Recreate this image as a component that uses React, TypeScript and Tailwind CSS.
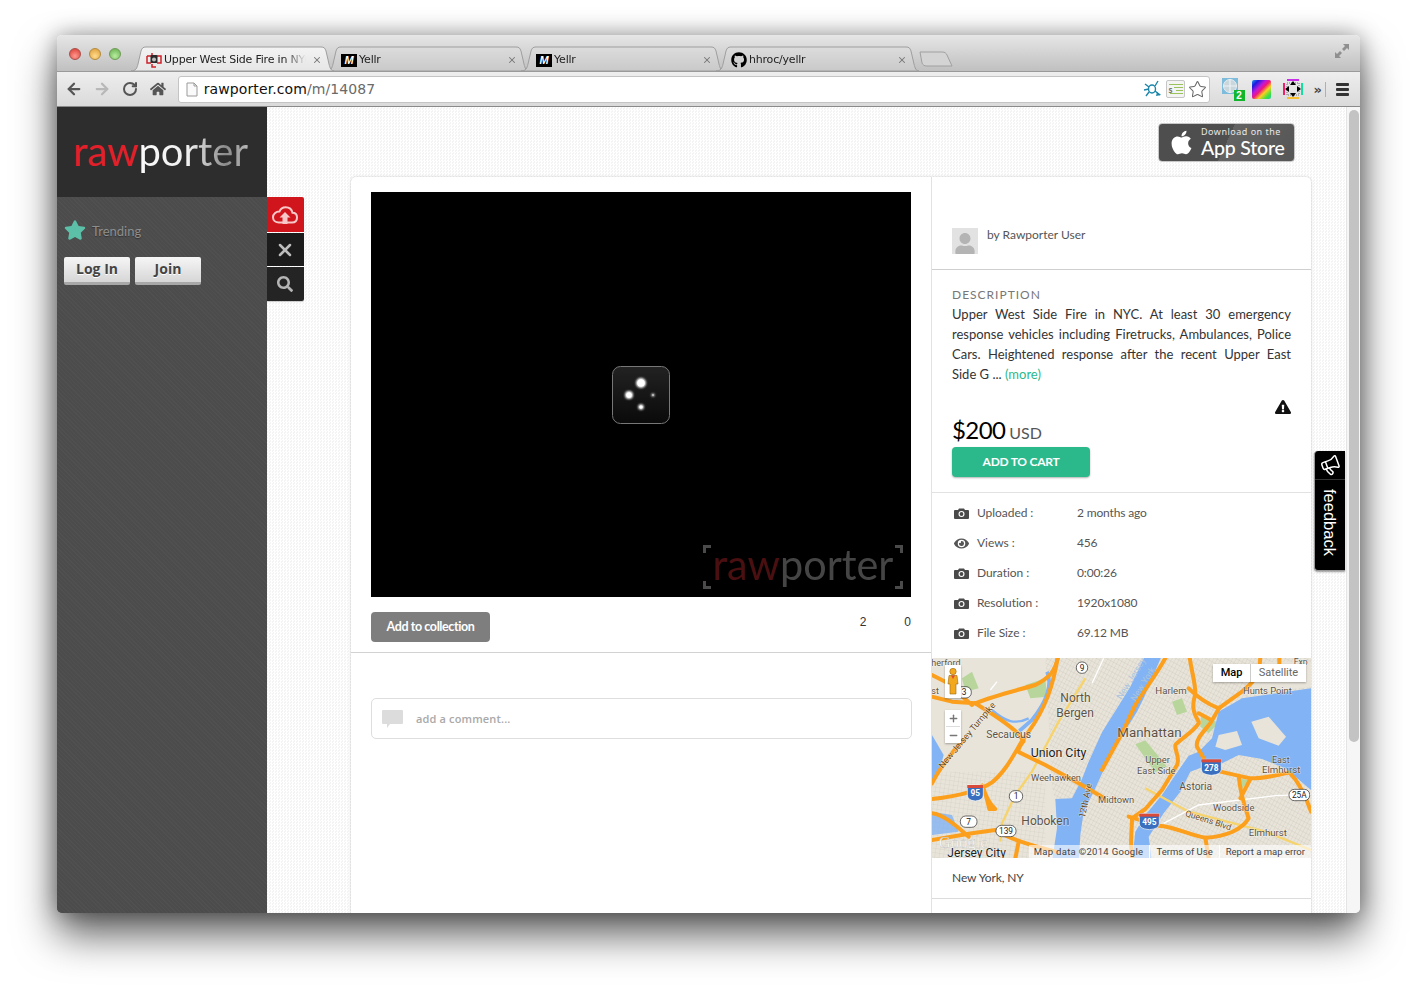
import React from "react";
import { ArrowLeft, ArrowRight, RotateCw, X, Star, Plus, Minus, Megaphone } from "lucide-react";
import { FaApple, FaEye, FaExclamationTriangle, FaGithub, FaStar, FaSearch, FaUser, FaHome } from "react-icons/fa";

const lato = "font-['Lato','Liberation_Sans',sans-serif]";
const lucida = "font-['DejaVu_Sans','Liberation_Sans',sans-serif]";

function Lights() {
  return (
    <div className="flex gap-[8px] pl-[12px] w-[74px] shrink-0 self-start pt-[13px]">
      <span className="w-[12px] h-[12px] rounded-full border border-[#a8504a] bg-[radial-gradient(circle_at_50%_70%,#ff9a90,#d8372f)]" />
      <span className="w-[12px] h-[12px] rounded-full border border-[#b58a3c] bg-[radial-gradient(circle_at_50%_70%,#ffdc8c,#dc9a34)]" />
      <span className="w-[12px] h-[12px] rounded-full border border-[#6f9b55] bg-[radial-gradient(circle_at_50%_70%,#b8eda0,#62ae4b)]" />
    </div>
  );
}

function Mark() {
  return (
    <span className="w-[16px] h-[13px] bg-black text-white text-[11px] leading-[13px] font-bold italic text-center font-['Liberation_Sans',sans-serif] shrink-0">
      M
    </span>
  );
}

function RawIcon() {
  return (
    <svg width="16" height="16" viewBox="0 0 16 16" className="shrink-0">
      <path d="M1 4 H5 M1 4 V11 H5 M11 4 H15 V11 H11" fill="none" stroke="#d0202a" strokeWidth="1.5" />
      <path d="M6 1 V4 M10 15 H6 V12" fill="none" stroke="#d0202a" strokeWidth="1.5" />
      <rect x="4.5" y="3" width="7" height="8" rx="1" fill="#2a2a2a" />
      <circle cx="8" cy="7.5" r="2" fill="#bbb" />
    </svg>
  );
}

function Tab({ active, icon, title }: { active?: boolean; icon: React.ReactNode; title: string }) {
  return (
    <div className={"relative w-[195px] h-[25px] flex items-center shrink-0 " + (active ? "z-10" : "")}>
      <svg className="absolute left-0 top-0" width="203" height="25" viewBox="0 0 203 25">
        <defs>
          <linearGradient id={active ? "tabA" : "tabB"} x1="0" x2="0" y1="0" y2="1">
            <stop offset="0" stopColor={active ? "#f3f3f3" : "#dcdcdc"} />
            <stop offset="1" stopColor={active ? "#e6e6e6" : "#c9c9c9"} />
          </linearGradient>
        </defs>
        <path
          d="M0 25 C5 25 6 22 7 18 L10 5 C11 2 12 1 15 1 L190 1 C193 1 194 2 195 5 L198 18 C199 22 200 25 203 25 Z"
          fill={active ? "url(#tabA)" : "url(#tabB)"}
          stroke="#9e9e9e"
          strokeWidth="1"
        />
      </svg>
      <div className={"relative flex items-center gap-[2px] pl-[15px] pt-[3px] w-[191px] text-[11px] text-[#222] " + lucida}>
        {icon}
        <span className="whitespace-nowrap overflow-hidden w-[142px] tracking-[-0.2px] [mask-image:linear-gradient(90deg,#000_85%,transparent)]">{title}</span>
        <X size={10} strokeWidth={2.5} className="ml-auto text-[#777]" />
      </div>
    </div>
  );
}

function TabStrip() {
  return (
    <div className="h-[36px] shrink-0 flex items-end bg-[linear-gradient(#e6e6e6,#c0c0c0)] relative">
      <Lights />
      <div className="flex items-end">
        <Tab active icon={<RawIcon />} title="Upper West Side Fire in NYC" />
        <Tab icon={<Mark />} title="Yellr" />
        <Tab icon={<Mark />} title="Yellr" />
        <Tab icon={<FaGithub size={16} className="text-black shrink-0" />} title="hhroc/yellr" />
      </div>
      <svg width="34" height="16" viewBox="0 0 34 16" className="ml-[8px] mb-[4px] shrink-0">
        <path d="M1 1 L23 1 C26 1 27 2 28 4 L33 15 L8 15 C5 15 4 14 3 12 Z" fill="#d4d4d4" stroke="#a0a0a0" />
      </svg>
      <svg width="16" height="16" viewBox="0 0 16 16" className="ml-auto mr-[10px] mb-[12px] shrink-0">
        <path d="M9 1 H15 V7 L13 5 L10 8 L8 6 L11 3 Z M1 9 L1 15 H7 L5 13 L8 10 L6 8 L3 11 Z" fill="#8f8f8f" />
      </svg>
    </div>
  );
}

function Toolbar() {
  return (
    <div className="h-[36px] shrink-0 border-t border-b border-t-[#9a9a9a] border-b-[#8a8a8a] bg-[linear-gradient(#eeeeee,#dadada)] flex items-center pl-[3px] pr-[11px]">
      <div className="w-[28px] flex justify-center"><ArrowLeft size={18} strokeWidth={3} className="text-[#555]" /></div>
      <div className="w-[28px] flex justify-center"><ArrowRight size={18} strokeWidth={3} className="text-[#b8b8b8]" /></div>
      <div className="w-[28px] flex justify-center"><RotateCw size={16} strokeWidth={3} className="text-[#555]" /></div>
      <div className="w-[28px] flex justify-center"><FaHome size={16} className="text-[#555]" /></div>
      <div className="ml-[6px] w-[1034px] h-[27px] bg-white border border-[#c4c4c4] rounded-[3px] flex items-center pl-[7px] pr-[2px]">
        <svg width="12" height="15" viewBox="0 0 12 15" className="shrink-0">
          <path d="M1 1 H8 L11 4 V14 H1 Z" fill="#fafafa" stroke="#9a9a9a" />
          <path d="M8 1 V4 H11" fill="none" stroke="#9a9a9a" />
        </svg>
        <span className={"ml-[6px] text-[14px] text-[#111] tracking-[0.1px] " + lucida}>
          rawporter.com<span className="text-[#6a6a6a]">/m/14087</span>
        </span>
        <svg width="19" height="18" viewBox="0 0 19 18" className="ml-auto shrink-0">
          <g stroke="#1d86a8" strokeWidth="1.4" fill="none">
            <ellipse cx="9" cy="9" rx="3.5" ry="4" />
            <path d="M6 7 L2 4 M12 6 L15 1 M12 11 L17 15 M6 12 L3 16 M6 9 L1 10" />
          </g>
          <path d="M14 12 L18 15 L13 16 Z" fill="#1d86a8" />
        </svg>
        <span className="ml-[4px] w-[19px] h-[18px] border border-[#c6c6c6] rounded-[2px] bg-[#f4f4f4] flex flex-col items-end justify-center gap-[2px] pr-[1px] shrink-0 relative">
          <span className="w-[14px] h-[1px] bg-[#9bc35c]" />
          <span className="w-[9px] h-[1px] bg-[#9bc35c]" />
          <span className="w-[7px] h-[1px] bg-[#9bc35c]" />
          <span className="w-[13px] h-[1px] bg-[#9bc35c]" />
          <span className="absolute left-[2px] top-[4px] text-[8px] leading-[10px] text-[#777] font-bold">s</span>
        </span>
        <Star size={19} strokeWidth={1.3} className="ml-[3px] text-[#666] fill-white shrink-0" />
      </div>
      <div className="ml-[12px] w-[23px] h-[23px] relative shrink-0">
        <svg width="16" height="16" viewBox="0 0 16 16" className="absolute left-0 top-0">
          <rect width="16" height="16" fill="#7fbcdc" />
          <circle cx="8" cy="8" r="6.5" fill="#c9d6dc" stroke="#e8eef0" />
          <path d="M8 1 V15 M1 8 H15" stroke="#eef2f4" strokeWidth="1.2" />
        </svg>
        <span className="absolute right-0 bottom-0 w-[11px] h-[11px] bg-[#12b52c] text-white text-[10px] leading-[11px] font-bold text-center font-['Liberation_Sans',sans-serif]">2</span>
      </div>
      <span className="ml-[7px] w-[19px] h-[19px] rounded-[2px] shrink-0 bg-[linear-gradient(135deg,#2a9df0_0%,#1a1ae0_18%,#c018d8_38%,#f01878_50%,#f8d020_66%,#40e040_84%,#20c8a0_100%)]" />
      <svg width="20" height="20" viewBox="0 0 20 20" className="ml-[12px] shrink-0">
        <rect x="4" y="0" width="12" height="2" fill="#c830e8" />
        <rect x="4" y="18" width="12" height="2" fill="#f8c030" />
        <rect x="0" y="4" width="2" height="12" fill="#f02070" />
        <rect x="18" y="4" width="2" height="12" fill="#10e0a0" />
        <rect x="4" y="4" width="12" height="12" fill="none" stroke="#777" strokeDasharray="1 1" />
        <path d="M10 2 L13 6 H7 Z M10 18 L13 14 H7 Z M2 10 L6 7 V13 Z M18 10 L14 7 V13 Z" fill="#000" />
      </svg>
      <span className={"ml-[11px] text-[13px] leading-none text-[#444] font-bold " + lucida}>»</span>
      <span className="ml-[3px] w-[1px] h-[15px] bg-[#b0b0b0]" />
      <div className="ml-[10px] flex flex-col gap-[2px] w-[13px]">
        <span className="h-[3px] bg-[#333] rounded-[1px]" />
        <span className="h-[3px] bg-[#333] rounded-[1px]" />
        <span className="h-[3px] bg-[#333] rounded-[1px]" />
      </div>
    </div>
  );
}

function Sidebar() {
  return (
    <div className="w-[210px] shrink-0 flex flex-col bg-[#4f4f4f] bg-[repeating-linear-gradient(45deg,#505050_0_1px,#4c4c4c_1px_3px)]">
      <div className="h-[90px] bg-[#2d2d2d] flex items-center pl-[16px]">
        <span className="text-[40px] leading-[40px] mt-[-3px] font-normal font-['Lato',sans-serif] whitespace-nowrap">
          <span className="text-[#e3202a]">raw</span>
          <span className="text-transparent bg-clip-text bg-[linear-gradient(90deg,#fafafa_0%,#f0f0f0_45%,#8a8a8a_80%,#b8b8b8_100%)]">porter</span>
        </span>
      </div>
      <div className="flex items-center pl-[7px] mt-[22px]">
        <FaStar size={22} className="text-[#5cbfa8]" />
        <span className={"ml-[6px] mt-[3px] text-[13px] text-[#8e8e8e] [text-shadow:0_1px_1px_#333] " + lato}>Trending</span>
      </div>
      <div className="flex gap-[5px] pl-[7px] mt-[15px] font-['Open_Sans',sans-serif] font-bold text-[14px] text-[#444]">
        <button className="w-[66px] h-[28px] pb-[2px] rounded-[2px] bg-[linear-gradient(#f6f6f6,#d6d6d6)] border-b-[3px] border-b-[#a8a8a8] [text-shadow:0_1px_0_#fff]">Log In</button>
        <button className="w-[66px] h-[28px] pb-[1px] rounded-[2px] bg-[linear-gradient(#f6f6f6,#d6d6d6)] border-b-[3px] border-b-[#a8a8a8] [text-shadow:0_1px_0_#fff]">Join</button>
      </div>
    </div>
  );
}

function SideTabs() {
  return (
    <div className="absolute left-0 top-[90px] w-[37px] flex flex-col gap-[1px] shadow-[0_1px_1px_rgba(0,0,0,0.2)] rounded-r-[2px]">
      <div className="h-[35px] bg-[#d0161c] flex items-center justify-center rounded-tr-[2px] pr-[1px]">
        <svg width="26" height="18" viewBox="0 0 26 18">
          <path d="M7 16.5 H20 C23 16.5 25 14.5 25 11.5 C25 8.5 23 6.8 20.5 6.8 C19.8 3.4 17 1.2 13.7 1.2 C10.8 1.2 8.4 3 7.4 5.6 C3.8 5.6 1 8 1 11.2 C1 14.2 3.5 16.5 7 16.5 Z" fill="none" stroke="#f8c8c8" strokeWidth="2" />
          <path d="M13 6 L18.5 11.5 H15.5 V18 H10.5 V11.5 H7.5 Z" fill="#f8c8c8" />
        </svg>
      </div>
      <div className="h-[33px] bg-[#1c1c1c] flex items-center justify-center pr-[1px]">
        <X size={20} strokeWidth={3} className="text-[#bdbdbd]" />
      </div>
      <div className="h-[34px] bg-[#242424] flex items-center justify-center rounded-br-[2px] pr-[1px]">
        <FaSearch size={16} className="text-[#b5b5b5]" />
      </div>
    </div>
  );
}

function AppStore() {
  return (
    <div className="self-end shrink-0 mr-[51px] w-[137px] h-[39px] rounded-[4px] border border-[#c8c8c8] bg-[linear-gradient(115deg,#4e4e4e_0%,#4e4e4e_50%,#636363_50%,#565656_100%)] flex items-center text-white">
      <FaApple size={27} className="ml-[9px] shrink-0" />
      <div className="ml-[6px] flex flex-col">
        <span className="text-[9px] leading-[10px] tracking-[0.5px] text-[#e8e8e8] mt-[1px] font-['Noto_Sans',sans-serif]">Download on the</span>
        <span className="text-[19.5px] leading-[22px] font-medium tracking-[-0.2px] font-['Lato',sans-serif]">App Store</span>
      </div>
    </div>
  );
}

function Video() {
  return (
    <div className="relative w-[540px] h-[405px] bg-black flex items-center justify-center">
      <svg width="58" height="58" viewBox="0 0 58 58" className="mt-[1px]">
        <defs>
          <linearGradient id="spin" x1="0" x2="0" y1="0" y2="1">
            <stop offset="0" stopColor="#222" />
            <stop offset="1" stopColor="#0a0a0a" />
          </linearGradient>
          <filter id="glow" x="-100%" y="-100%" width="300%" height="300%">
            <feGaussianBlur stdDeviation="1.3" />
          </filter>
        </defs>
        <rect x="0.5" y="0.5" width="57" height="57" rx="8" fill="url(#spin)" stroke="#777" />
        <g fill="#fff" filter="url(#glow)">
          <circle cx="29" cy="17" r="5" />
          <circle cx="17" cy="29" r="4" />
          <circle cx="41" cy="29" r="1.6" />
          <circle cx="29" cy="41" r="2.8" />
        </g>
        <g fill="#fff">
          <circle cx="29" cy="17" r="3.6" />
          <circle cx="17" cy="29" r="2.6" />
          <circle cx="41" cy="29" r="0.7" />
          <circle cx="29" cy="41" r="1.6" />
        </g>
      </svg>
      <div className="absolute right-[8px] bottom-[8px] w-[200px] h-[44px] flex items-center justify-center">
        <span className="absolute left-0 top-0 w-[8px] h-[8px] border-l-[3px] border-t-[3px] border-[#4a4a4a]" />
        <span className="absolute right-0 top-0 w-[8px] h-[8px] border-r-[3px] border-t-[3px] border-[#4a4a4a]" />
        <span className="absolute left-0 bottom-0 w-[8px] h-[8px] border-l-[3px] border-b-[3px] border-[#4a4a4a]" />
        <span className="absolute right-0 bottom-0 w-[8px] h-[8px] border-r-[3px] border-b-[3px] border-[#4a4a4a]" />
        <span className="text-[42px] leading-[40px] mt-[-7px] font-normal font-['Lato',sans-serif] whitespace-nowrap scale-x-[0.985]">
          <span className="text-[#4a0f10]">raw</span>
          <span className="text-[#454545]">porter</span>
        </span>
      </div>
    </div>
  );
}

function LeftColumn() {
  return (
    <div className="w-[581px] shrink-0 border-r border-[#e2e2e2] pt-[15px] flex flex-col">
      <div className="px-[20px]">
        <Video />
        <div className="mt-[15px] flex items-start justify-between">
          <button className={"w-[119px] h-[30px] rounded-[4px] bg-[#7e7e7e] text-white font-bold text-[12.5px] tracking-[-0.4px] " + lato}>Add to collection</button>
          <div className="flex gap-[38px] pt-[1px] text-[12px] leading-[18px] text-[#333] font-['Liberation_Sans',sans-serif]">
            <span>2</span>
            <span>0</span>
          </div>
        </div>
      </div>
      <div className="mt-[10px] border-t border-[#d2d2d2] h-[46px]" />
      <div className="ml-[20px] w-[541px] h-[41px] border border-[#dedede] rounded-[5px] flex items-center pl-[10px]">
        <svg width="21" height="18" viewBox="0 0 21 18">
          <path d="M1 0 H20 A1 1 0 0 1 21 1 V13 A1 1 0 0 1 20 14 H8 L5 18 V14 H1 A1 1 0 0 1 0 13 V1 A1 1 0 0 1 1 0 Z" fill="#dcdcdc" />
        </svg>
        <span className="ml-[13px] pt-[1px] text-[11px] tracking-[0.15px] text-[#a9a9a9] font-['Open_Sans',sans-serif] font-semibold">add a comment...</span>
      </div>
    </div>
  );
}

function Badge({ x, y, t, w = 30 }: { x: number; y: number; t: string; w?: number }) {
  return (
    <g>
      <rect x={x - w / 2} y={y - 17} width={w} height={34} rx={16} fill="#fff" stroke="#222" strokeWidth="2" />
      <text x={x} y={y + 9} fontSize="25" textAnchor="middle" fill="#222">{t}</text>
    </g>
  );
}

function Shield({ x, y, t, w = 46 }: { x: number; y: number; t: string; w?: number }) {
  return (
    <g>
      <path d={`M${x - w / 2} ${y - 22} H${x + w / 2} V${y + 8} Q${x + w / 2} ${y + 24} ${x} ${y + 26} Q${x - w / 2} ${y + 24} ${x - w / 2} ${y + 8} Z`} fill="#3a6fc0" stroke="#fff" strokeWidth="2" />
      <rect x={x - w / 2} y={y - 22} width={w} height={9} fill="#d84a3a" />
      <text x={x} y={y + 12} fontSize="25" fontWeight="700" textAnchor="middle" fill="#fff">{t}</text>
    </g>
  );
}

function MapView() {
  const label = "#5c5346";
  const highways = [
    "M380 0 C370 50 350 70 310 90 C260 105 190 120 130 145",
    "M130 145 C170 170 230 205 262 240 L275 258 C262 275 255 285 262 292 L340 330 L440 385 L515 428",
    "M378 0 C365 90 340 160 290 230 L270 258 C245 300 220 350 180 382 C140 410 60 425 0 432",
    "M0 385 C20 345 60 290 95 255",
    "M705 0 C680 50 640 100 610 150 C590 190 575 230 555 262 L510 345",
    "M772 0 C778 50 790 80 790 115 C785 140 775 160 800 200",
    "M770 100 C800 130 835 150 860 160 L930 110 C960 85 985 65 985 0",
    "M1042 0 L1042 40",
    "M800 175 L838 195 M862 158 L835 205 C810 235 790 255 795 275 L822 322",
    "M822 322 L865 350 L955 370 C1000 370 1040 360 1072 352 C1100 380 1120 420 1137 470",
    "M800 205 C780 235 740 255 730 270 C728 290 745 305 735 330 L690 405 L640 462 L600 490 C600 530 592 570 602 610",
    "M590 485 L680 512 C730 515 770 540 820 548 C880 545 930 525 950 490 C940 460 925 420 920 362",
    "M955 372 L925 430",
    "M0 555 L120 535 L190 525 C220 545 290 570 380 592",
    "M260 560 L250 610",
    "M150 392 C160 420 175 450 190 462 L172 462 C165 430 160 410 150 392",
    "M820 548 L830 610 M0 60 L40 80 L120 150 M0 125 L60 140 L130 145",
    "M0 475 C40 480 80 520 110 545",
  ];
  return (
    <div className="relative w-[379px] h-[200px] overflow-hidden">
      <svg width="379" height="200" viewBox="0 9 1137 600" className="block font-['Roboto','Liberation_Sans',sans-serif]">
        <defs>
          <pattern id="grid" width="10" height="14" patternUnits="userSpaceOnUse" patternTransform="rotate(28)">
            <path d="M0 0 H10 M0 0 V14" stroke="#c4bfb1" strokeWidth="1.5" fill="none" />
          </pattern>
          <pattern id="grid2" width="13" height="13" patternUnits="userSpaceOnUse" patternTransform="rotate(8)">
            <path d="M0 0 H13 M0 0 V13" stroke="#cbc6b9" strokeWidth="1.5" fill="none" />
          </pattern>
        </defs>
        <rect x="0" y="0" width="1137" height="620" fill="#e8e4da" />
        <path d="M340 0 H1137 V620 H420 L360 400 Z" fill="url(#grid)" />
        <path d="M0 350 H340 V620 H0 Z" fill="url(#grid2)" />
        <g fill="#b8d69c">
          <path d="M280 90 L340 70 L345 125 L295 130 Z" />
          <path d="M610 268 L640 256 L705 335 L670 352 Z" />
          <path d="M808 175 L860 205 L830 235 L805 215 Z" />
          <path d="M915 370 L950 375 L930 402 Z" />
          <path d="M90 70 L120 50 L140 100 L100 110 Z" />
          <path d="M720 140 L750 130 L765 170 L735 180 Z" />
        </g>
        <g fill="#82b3f4">
          <path d="M640 0 L690 0 L635 130 L615 170 L590 210 L550 270 L515 345 L490 400 L455 470 L445 540 L440 620 L360 620 L375 520 L370 432 L420 430 L450 372 L470 320 L510 232 L555 160 L595 95 Z" />
          <path d="M770 302 L730 360 L690 420 L640 480 L610 530 L600 620 L660 620 L650 545 L695 475 L745 410 L775 350 L815 335 L850 335 L920 300 L990 312 L1060 340 L1137 405 L1137 100 L930 130 L860 170 L840 250 L800 290 Z" />
          <path d="M0 240 L35 300 L20 355 L0 385 Z" />
          <path d="M0 470 L60 480 L80 530 L0 540 Z" opacity="0.8" />
        </g>
        <path d="M345 50 C365 95 335 150 300 195 L262 228" stroke="#82b3f4" strokeWidth="11" fill="none" />
        <path d="M180 165 C220 200 250 210 290 190" stroke="#82b3f4" strokeWidth="7" fill="none" />
        <g fill="#e8e4da">
          <path d="M958 200 L1010 185 L1062 245 L1040 272 L980 250 Z" />
          <path d="M860 240 L915 228 L930 270 L880 285 L850 275 Z" />
          <path d="M780 235 L800 225 L790 270 L765 290 Z" />
          <path d="M1000 20 L1137 20 L1137 95 L950 115 Z" />
        </g>
        <path d="M640 400 L770 470 L1000 530 L1137 585" stroke="#f7d36b" strokeWidth="7" fill="none" />
        <path d="M460 70 L380 200 L300 350 L250 420 L210 505 L205 560" stroke="#f7d36b" strokeWidth="7" fill="none" />
        <path d="M695 505 L800 450 L1030 422 L1137 418 M480 85 L515 10 M175 105 L195 80" stroke="#fff" strokeWidth="4" fill="none" />
        <g stroke="#fb9f1d" strokeWidth="12" fill="none" strokeLinejoin="round" strokeLinecap="round">
          {highways.map((d, i) => <path key={i} d={d} />)}
        </g>
        <g fill={label} stroke="#fff" strokeWidth="3" paintOrder="stroke" strokeOpacity="0.55">
          <text x="-2" y="32" fontSize="27">herford</text>
          <text x="-2" y="117" fontSize="27">st</text>
          <text x="385" y="141" fontSize="36">North</text>
          <text x="373" y="185" fontSize="36">Bergen</text>
          <text x="163" y="248" fontSize="31">Secaucus</text>
          <text x="296" y="307" fontSize="37" fill="#222">Union City</text>
          <text x="297" y="378" fontSize="28">Weehawken</text>
          <text x="556" y="245" fontSize="40">Manhattan</text>
          <text x="640" y="323" fontSize="28">Upper</text>
          <text x="615" y="356" fontSize="28">East Side</text>
          <text x="670" y="118" fontSize="29">Harlem</text>
          <text x="933" y="118" fontSize="28">Hunts Point</text>
          <text x="1020" y="323" fontSize="27">East</text>
          <text x="990" y="355" fontSize="29">Elmhurst</text>
          <text x="742" y="404" fontSize="31">Astoria</text>
          <text x="498" y="445" fontSize="28">Midtown</text>
          <text x="843" y="468" fontSize="28">Woodside</text>
          <text x="950" y="544" fontSize="29">Elmhurst</text>
          <text x="268" y="510" fontSize="36">Hoboken</text>
          <text x="1085" y="30" fontSize="26">Exp</text>
          <text transform="translate(32 342) rotate(-50)" fontSize="27" fill="#6a4a20">New Jersey Turnpike</text>
          <text transform="translate(458 490) rotate(-78)" fontSize="27" fill="#6a4a20">12th Ave</text>
          <text transform="translate(758 482) rotate(18)" fontSize="26" fill="#6a4a20">Queens Blvd</text>
        </g>
        <g fill="#a9c4e0" fontSize="27">
          <text transform="translate(568 135) rotate(-58)">New Jersey</text>
          <text transform="translate(610 140) rotate(-58)">New York</text>
        </g>
        <Badge x={450} y={38} t="9" w={34} />
        <Badge x={96} y={112} t="3" w={44} />
        <Shield x={130} y={412} t="95" w={48} />
        <Badge x={252} y={424} t="1" w={40} />
        <Badge x={110} y={500} t="7" w={50} />
        <Badge x={222} y={528} t="139" w={60} />
        <Shield x={652} y={498} t="495" w={60} />
        <Shield x={838} y={335} t="278" w={60} />
        <Badge x={1102} y={420} t="25A" w={62} />
        <text x="20" y="578" fontSize="50" fill="#fff" fillOpacity="0.85" stroke="#999" strokeWidth="1" strokeOpacity="0.6" fontFamily="Liberation Serif, serif">Google</text>
        <text x="46" y="606" fontSize="36" fill="#222" stroke="#fff" strokeWidth="3" strokeOpacity="0.6" paintOrder="stroke">Jersey City</text>
      </svg>

      <div className="absolute right-[5px] top-[6px] h-[18px] flex bg-white shadow-[0_1px_2px_rgba(0,0,0,0.3)] text-[11px] leading-[18px] font-['Roboto',sans-serif]">
        <span className="w-[37px] text-center text-black font-medium">Map</span>
        <span className="w-[56px] text-center text-[#666] border-l border-[#ccc]">Satellite</span>
      </div>
      <div className="absolute left-[13px] top-[7px] w-[16px] h-[33px] bg-white shadow-[0_1px_2px_rgba(0,0,0,0.3)] flex justify-center items-start pt-[3px]">
        <svg width="12" height="27" viewBox="0 0 12 27">
          <circle cx="6" cy="3.5" r="3.2" fill="#f2a91d" stroke="#9a6a10" strokeWidth="0.6" />
          <path d="M2 7.5 H10 L11 16 H9 V26 H3 V16 H1 Z" fill="#f2a91d" stroke="#9a6a10" strokeWidth="0.6" />
          <path d="M4 7.5 H8 L6 11 Z" fill="#e0483a" />
        </svg>
      </div>
      <div className="absolute left-[13px] top-[52px] w-[16px] h-[33px] bg-white shadow-[0_1px_2px_rgba(0,0,0,0.3)] flex flex-col items-center text-[#777]">
        <span className="h-[16px] flex items-center"><Plus size={11} strokeWidth={3} /></span>
        <span className="w-[14px] h-[1px] bg-[#ddd]" />
        <span className="h-[16px] flex items-center"><Minus size={11} strokeWidth={3} /></span>
      </div>
      <div className="absolute right-0 bottom-0 h-[13px] pl-[5px] pr-[6px] flex bg-white/60 text-[9.5px] leading-[13px] text-[#444] font-['Roboto',sans-serif] whitespace-nowrap">
        <span className="tracking-[0.3px]">Map data ©2014 Google</span>
        <span className="ml-[6px] pl-[6px] border-l border-white">Terms of Use</span>
        <span className="ml-[6px] pl-[6px] border-l border-white">Report a map error</span>
      </div>
    </div>
  );
}

function Cam() {
  return (
    <svg width="15" height="11" viewBox="0 0 15 11" className="block">
      <path d="M0 3 A1 1 0 0 1 1 2 H4 L5 0.5 H10 L11 2 H14 A1 1 0 0 1 15 3 V10 A1 1 0 0 1 14 11 H1 A1 1 0 0 1 0 10 Z" fill="#4a4a4a" />
      <circle cx="7.5" cy="6" r="3" fill="#fff" />
      <circle cx="7.5" cy="6" r="1.9" fill="#4a4a4a" />
    </svg>
  );
}

function Row({ icon, k, v }: { icon: React.ReactNode; k: string; v: string }) {
  return (
    <div className={"h-[30px] flex items-center pl-[22px] text-[12px] text-[#555] " + lato}>
      <span className="w-[23px] shrink-0 text-[#555]">{icon}</span>
      <span className="w-[100px] shrink-0 tracking-[-0.05px]">{k}</span>
      <span className="tracking-[-0.15px]">{v}</span>
    </div>
  );
}

function RightColumn() {
  return (
    <div className={"w-[379px] shrink-0 flex flex-col " + lato}>
      <div className="h-[93px] border-b border-[#cfcfcf] pl-[20px] pt-[51px] flex items-start">
        <span className="w-[26px] h-[26px] bg-[#e2e2e2] flex items-end justify-center overflow-hidden shrink-0">
          <FaUser size={22} className="text-[#b4b4b4] mb-[-1px]" />
        </span>
        <span className="ml-[9px] text-[12px] leading-[13px] text-[#555]">by Rawporter User</span>
      </div>
      <div className="px-[20px] pt-[18px] h-[223px] border-b border-[#e2e2e2] flex flex-col">
        <span className="text-[12px] leading-[14px] tracking-[1px] text-[#777]">DESCRIPTION</span>
        <p className="mt-[2px] text-[13px] leading-[20px] text-[#333] text-justify [text-align-last:justify]">
          Upper West Side Fire in NYC. At least 30 emergency response vehicles including Firetrucks, Ambulances, Police Cars. Heightened response after the recent Upper East
        </p>
        <p className="text-[13px] leading-[20px] text-[#333]">
          Side G ... <span className="text-[#2bb98c]">(more)</span>
        </p>
        <div className="flex justify-end mt-[15px]">
          <FaExclamationTriangle size={16} className="text-[#111]" />
        </div>
        <div className="flex items-baseline gap-[4px] leading-[30px]">
          <span className="text-[24px] text-black tracking-[-0.6px]">$200</span>
          <span className="text-[16px] text-[#555]">USD</span>
        </div>
        <button className="mt-[-1px] w-[138px] h-[30px] rounded-[4px] bg-[#2bb98c] text-white font-bold text-[12px] tracking-[-0.25px] shadow-[0_1px_2px_rgba(0,0,0,0.3)]">ADD TO CART</button>
      </div>
      <div className="pt-[5px]">
        <Row icon={<Cam />} k="Uploaded :" v="2 months ago" />
        <Row icon={<FaEye size={15} />} k="Views :" v="456" />
        <Row icon={<Cam />} k="Duration :" v="0:00:26" />
        <Row icon={<Cam />} k="Resolution :" v="1920x1080" />
        <Row icon={<Cam />} k="File Size :" v="69.12 MB" />
      </div>
      <div className="mt-[10px]"><MapView /></div>
      <div className="h-[41px] border-b border-[#dcdcdc] pl-[20px] flex items-center text-[12px] tracking-[-0.1px] text-[#444]">New York, NY</div>
      <div className="h-[60px]" />
    </div>
  );
}

function Feedback() {
  return (
    <div className="absolute right-[1px] top-[344px] w-[31px] h-[120px] bg-black border-l border-b border-[#999] rounded-bl-[4px] rounded-tl-[4px] flex flex-col items-center text-white shadow-[0_1px_2px_rgba(0,0,0,0.4)]">
      <div className="h-[29px] w-full border-b border-[#333] flex items-center justify-center">
        <Megaphone size={21} strokeWidth={1.7} className="text-white rotate-[-20deg]" />
      </div>
      <span className="mt-[9px] text-[16.5px] leading-[16px] [writing-mode:vertical-rl] font-['Liberation_Sans',sans-serif]">feedback</span>
    </div>
  );
}

export default function App() {
  return (
    <div className="w-[1417px] h-[992px] bg-white overflow-hidden pt-[35px] pl-[57px]">
      <div className="w-[1303px] h-[878px] flex flex-col rounded-[5px] overflow-hidden shadow-[0_22px_42px_rgba(0,0,0,0.62),0_0_22px_rgba(0,0,0,0.35)]">
        <TabStrip />
        <Toolbar />
        <div className="flex-1 min-h-0 flex">
          <Sidebar />
          <div className="flex-1 min-w-0 relative flex flex-col pt-[16px] overflow-hidden bg-white bg-[repeating-conic-gradient(#ffffff_0_25%,#f4f4f4_0_50%)] bg-[length:3px_3px]">
            <SideTabs />
            <AppStore />
            <div className="ml-[84px] mt-[15px] w-[960px] shrink-0 flex bg-white rounded-t-[5px] shadow-[0_0_3px_rgba(0,0,0,0.2)]">
              <LeftColumn />
              <RightColumn />
            </div>
            <Feedback />
          </div>
          <div className="w-[14px] shrink-0 bg-[#f6f6f6] border-l border-[#e4e4e4] pt-[3px] pl-[2px]">
            <div className="w-[10px] h-[632px] rounded-[5px] bg-[#c3c3c3]" />
          </div>
        </div>
      </div>
    </div>
  );
}
